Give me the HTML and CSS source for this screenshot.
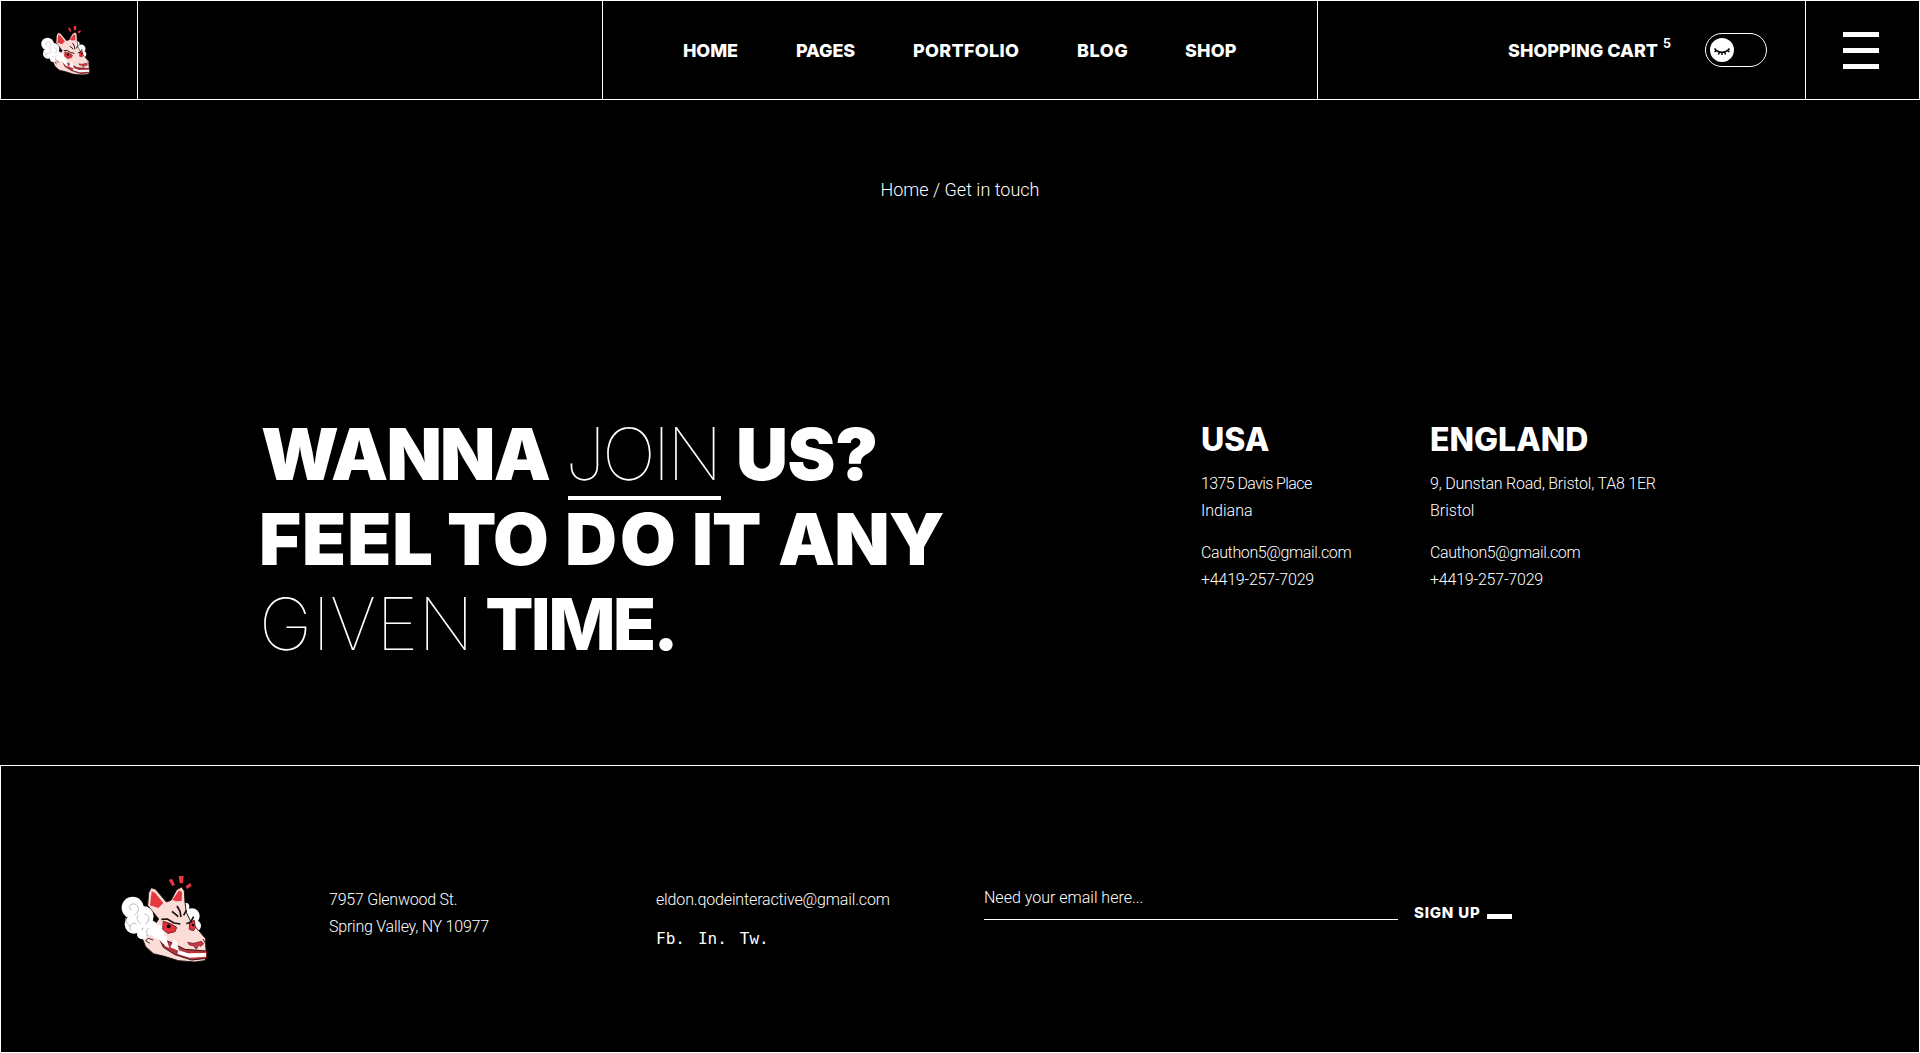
FILE: index.html
```html
<!DOCTYPE html>
<html lang="en">
<head>
<meta charset="utf-8">
<title>Get in touch</title>
<link rel="stylesheet" href="styles.css">
</head>
<body>
<svg class="sprite" aria-hidden="true">
  <symbol id="fox" viewBox="0 0 360 360">
    <path class="red" d="M206 60l10-4 9 19-8 3zM236 48h15l-2 22h-10zM257 78l14-9 4 9-14 9z"/>
    <g class="cloud">
      <circle cx="276" cy="168" r="23"/><circle cx="286" cy="197" r="17"/><circle cx="256" cy="140" r="12"/>
    </g>
    <path class="skin" d="M143 136l3-38 8-15 13 5 22 26 10 12 14-5 17-32 15-8 8 12 2 34 4 30 14 29 25 28 19 22v18l3 38-6 10-31 4-48-4-42-13-33-8-23-21-11-26 20-12 30-45z"/>
    <path class="red" d="M150 136l5-42 10 4 25 31-15 15zM217 120l20-29 9 5-1 27-16 1z"/>
    <path class="maw" d="M178 236l32 10 45 22 66 5v22l-46 5-50-16-35-22z"/>
    <path class="teeth" d="M234 270l30 10 54-1v11l-49 3-36-11z"/>
    <path class="teeth" d="M211 262l10-21q9-1 11 9l5 23zM187 238l13 2 8 24-13-6z"/>
    <g class="cloud">
      <circle cx="98" cy="143" r="33"/><circle cx="130" cy="169" r="31"/><circle cx="102" cy="193" r="28"/><circle cx="150" cy="203" r="23"/><circle cx="126" cy="223" r="15"/><circle cx="174" cy="216" r="20"/>
      <path d="M180 225l19 3 4 30-15-8-21-20z"/>
    </g>
    <path class="curl" d="M104 165c18-9 13-37-7-33-13 4-11 17-1 18M135 192c17-7 14-31-2-29M94 213c-13-15 4-30 16-20M78 173c-2 12 5 23 16 26M116 164c-8 8-5 22 6 27M145 227c-9-6-8-18 2-22"/>
    <path class="eye" d="M190 184l22 7 18 11-5 13-21 5-16-12zM269 187l14-6 3 22-6 9-12-4z"/>
    <circle cx="206" cy="199" r="6"/><circle cx="279" cy="195" r="4"/>
    <path class="brow" d="M184 178l18-1 20 12 19 3M259 191l13-5 9-16M216 154l19 16M231 138l9 16 3 17M259 151l-8 15"/>
    <path class="nose" d="M263 247l17 3 25-6 6 7-8 8-7-3-7 12-9-11-12-2z"/>
    <path class="jaw" d="M160 240l-15-5-8 7 12 8M309 237l7 12"/>
  </symbol>
</svg>

<header class="header">
  <a class="logo-cell"><svg class="logo"><use href="#fox"/></svg></a>
  <div class="blank-cell"></div>
  <nav class="nav">
    <a>HOME</a><a class="pages">PAGES</a><a class="portfolio">PORTFOLIO</a><a class="blog">BLOG</a><a class="shop">SHOP</a>
  </nav>
  <div class="tools">
    <a class="cart">SHOPPING CART<span class="count">5</span></a>
    <span class="toggle"><span class="knob"><svg viewBox="0 0 24 24"><path d="M4.5 10.5c3.500 5 11.500 5 15 0M6.500 12.500l-2 1.500M9.500 14l-1 2.500M12 14.500v2.500M14.500 14l1 2.500M17.500 12.500l2 1.500"/></svg></span></span>
  </div>
  <a class="menu"><i></i><i></i><i></i></a>
</header>

<main class="main">
  <p class="crumbs">Home / Get in touch</p>
  <section class="contact">
    <h1 class="title">
      <span class="line line-1"><span class="wanna">WANNA</span> <span class="thin join">JOIN</span> <span class="us">US?</span></span>
      <span class="line line-2"><span class="feel">FEEL</span> <span class="to">TO</span> <span class="do">DO</span> <span class="it">IT</span> <span class="any">ANY</span></span>
      <span class="line line-3"><span class="thin">GIVEN</span> <span class="time">TIME.</span></span>
    </h1>
    <address class="office usa">
      <h2>USA</h2>
      <p><span class="davis">1375 Davis Place</span><br>Indiana</p>
      <p><span class="mail">Cauthon5@gmail.com</span><br><span class="phone">+4419-257-7029</span></p>
    </address>
    <address class="office">
      <h2>ENGLAND</h2>
      <p><span class="road">9, Dunstan Road, Bristol, TA8 1ER</span><br>Bristol</p>
      <p><span class="mail">Cauthon5@gmail.com</span><br><span class="phone">+4419-257-7029</span></p>
    </address>
  </section>
</main>

<footer class="footer">
  <svg class="footer-logo"><use href="#fox"/></svg>
  <p class="street">7957 Glenwood St.<br>Spring Valley, NY 10977</p>
  <div class="reach">
    <p class="eldon">eldon.qodeinteractive@gmail.com</p>
    <p class="social"><a>Fb.</a><a>In.</a><a>Tw.</a></p>
  </div>
  <form class="signup">
    <label class="field">Need your email here...</label>
    <a class="submit">SIGN UP<i></i></a>
  </form>
</footer>
</body>
</html>
```
FILE: styles.css
```css
* { box-sizing: border-box; }
body {
  margin: 0;
  height: 1053px;
  display: flex;
  flex-direction: column;
  background: #000;
  color: #fff;
  font: 300 16px/27px Roboto, sans-serif;
  overflow: hidden;
}
p, h1, h2 { margin: 0; }
i { display: block; background: #fff; }
.sprite { position: absolute; width: 0; height: 0; }

/* Fox mark */
.red { fill: #e5393f; }
.skin { fill: #fbdcd7; stroke: #241616; stroke-width: 3; }
.maw { fill: #b8343c; stroke: #3a1518; stroke-width: 3; }
.teeth { fill: #fff; }
.cloud { fill: #fff; }
.curl { fill: none; stroke: #bbb; stroke-width: 3; }
.eye { fill: #e8323b; stroke: #7a1a20; stroke-width: 3; }
.brow { fill: none; stroke: #1c1010; stroke-width: 5; }
.jaw { fill: none; stroke: #3a2020; stroke-width: 3; }
.nose { fill: #c93a42; stroke: #5a1a20; stroke-width: 2; }

/* Header */
.header {
  height: 100px;
  display: grid;
  grid-template-columns: 137px 465px 715px 488px 1fr;
  border: 1px solid #fff;
  font: 800 18px/24px Inter, sans-serif;
}
.header > * { border-right: 1px solid #fff; }
.header > :last-child { border-right: 0; }
.logo-cell { padding: 16px 0 0 28px; }
.logo { display: block; width: 68px; height: 68px; }
.nav { display: flex; align-items: center; padding: 1px 0 0 80px; }
.nav a { width: 113px; letter-spacing: -.1px; }
.nav .pages { width: 117px; }
.nav .portfolio { width: 164px; letter-spacing: .3px; }
.nav .blog { width: 108px; letter-spacing: .6px; }
.nav .shop { width: 60px; letter-spacing: .2px; }
.tools { display: flex; align-items: center; justify-content: flex-end; padding-right: 38px; gap: 34px; }
.cart { display: flex; gap: 5px; padding-top: 1px; }
.count { font-size: 12.500px; line-height: 10px; font-weight: 700; }
.toggle { width: 62px; height: 34px; border: 1px solid #fff; border-radius: 17px; padding: 4px; }
.knob { display: block; width: 24px; height: 24px; border-radius: 50%; background: #fff; }
.knob svg { display: block; fill: none; stroke: #000; stroke-width: 1.5; }
.menu { display: flex; flex-direction: column; gap: 11px; padding: 31px 0 0 37px; }
.menu i { width: 36px; height: 5px; }

/* Contact */
.main { height: 665px; }
.crumbs { margin-top: 76px; text-align: center; font-size: 18px; }
.contact { display: flex; padding: 208px 0 0 259px; }
.title { width: 942px; font: 900 72px/85px Inter, sans-serif; }
.line { display: grid; height: 85px; }
.line-1 { grid-template-columns: 307px 168px 1fr; padding-left: 2px; }
.line-2 { grid-template-columns: 189px 117px 127px 86px 1fr; }
.line-3 { grid-template-columns: 226px 1fr; }
.line > span { justify-self: start; }
.line > .thin { font-weight: 100; }
.wanna { letter-spacing: -1.8px; }
.join { letter-spacing: -3.3px; width: 153px; height: 89px; border-bottom: 4px solid #fff; text-indent: -3px; }
.us { letter-spacing: -.5px; }
.feel { letter-spacing: 1px; }
.to { letter-spacing: -1px; margin-left: -1px; }
.do { letter-spacing: 3px; }
.it { letter-spacing: -1px; }
.any { letter-spacing: -1px; }
.time { font-weight: 800; letter-spacing: -3.2px; }
.office { font-style: normal; }
.usa { width: 229px; }
.office h2 { font: 800 32px/40px Inter, sans-serif; margin: 9px 0 10px; }
.office p { margin-bottom: 15px; }
.davis { letter-spacing: -.6px; }
.mail { letter-spacing: -.38px; }
.phone { letter-spacing: -.2px; }
.road { letter-spacing: -.22px; }

/* Footer */
.footer {
  flex: 1;
  display: grid;
  grid-template-columns: 229px 327px 328px 1fr;
  border: 1px solid #fff;
  padding: 94px 0 0 99px;
}
.footer-logo { width: 120px; height: 120px; }
.street, .reach { padding-top: 26px; }
.street { letter-spacing: -.23px; }
.eldon { letter-spacing: -.15px; }
.social { display: flex; gap: 13px; margin-top: 12px; font: 400 16px/27px "DejaVu Sans Mono", monospace; }
.signup { display: flex; padding-top: 24px; }
.field { width: 414px; height: 36px; border-bottom: 1px solid #fff; }
.submit { display: flex; align-items: center; gap: 6px; height: 20px; margin: 19px 0 0 16px; font: 800 15px/20px Inter, sans-serif; letter-spacing: .8px; }
.submit i { width: 25px; height: 5px; margin-top: 6px; }
```
